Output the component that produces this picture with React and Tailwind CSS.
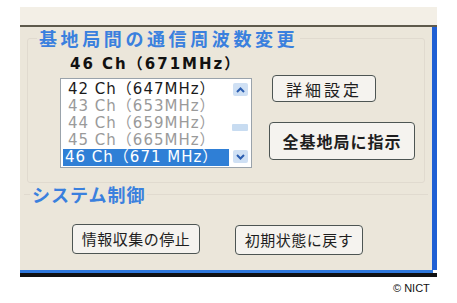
import React from 'react';

const items = [
  { label: '42 Ch（647MHz）', tone: 'text-[#1a1a1a]' },
  { label: '43 Ch（653MHz）', tone: 'text-[#9a9a9a]' },
  { label: '44 Ch（659MHz）', tone: 'text-[#9a9a9a]' },
  { label: '45 Ch（665MHz）', tone: 'text-[#9a9a9a]' },
];

const jp = { fontFamily: '"Noto Sans CJK JP", "DejaVu Sans", sans-serif' };
const latin = { fontFamily: '"DejaVu Sans", "Noto Sans CJK JP", sans-serif' };

const Chevron = ({ up }) => (
  <div className="w-[15px] h-[13px] bg-[#cfe0f4] rounded-[2px] flex items-center justify-center">
    <svg width="9" height="6" viewBox="0 0 9 6">
      <path
        d={up ? 'M1 5 L4.5 1.5 L8 5' : 'M1 1 L4.5 4.5 L8 1'}
        fill="none"
        stroke="#2a5db0"
        strokeWidth="2"
      />
    </svg>
  </div>
);

const Button = ({ children, className }) => (
  <button
    className={`border-[1.5px] border-[#4d5553] rounded-[4px] bg-[#f5f3ef] text-[#1e1e1e] flex items-center justify-center ${className}`}
    style={jp}
  >
    {children}
  </button>
);

const App = () => {
  return (
    <div className="w-[457px] h-[303px] bg-white relative overflow-hidden">
      <div className="ml-[20px] pt-[7px] w-[417px]">
        <div className="h-[18px] bg-[#f3efe6]" />
        <div className="h-[2px] bg-[#5e5a4c]" />
        <div className="flex">
          <div className="w-[412px] bg-[#ebe6da] h-[243px]">
            <fieldset className="ml-[7px] w-[398px] h-[156px] border border-[#e0dacf] rounded-[3px]">
              <legend
                className="ml-[9px] px-[2px] text-[18px] leading-[22px] font-bold text-[#3a80de] tracking-[3.6px]"
                style={jp}
              >
                基地局間の通信周波数変更
              </legend>
              <div className="flex">
                <div className="ml-[32px]">
                  <div
                    className="ml-[10px] mt-[6px] text-[15px] leading-[18px] font-bold text-[#111] tracking-[2px]"
                    style={latin}
                  >
                    46 Ch（671MHz）
                  </div>
                  <div className="mt-[5px] w-[192px] h-[90px] bg-white border border-[#9aa3ab] flex">
                    <div className="flex-1 pt-[2px] pl-[2px] flex flex-col">
                      {items.map((it) => (
                        <div
                          key={it.label}
                          className={`h-[17px] pl-[5px] text-[15px] leading-[17px] whitespace-nowrap tracking-[1px] ${it.tone}`}
                          style={latin}
                        >
                          {it.label}
                        </div>
                      ))}
                      <div
                        className="h-[17px] pl-[2px] bg-[#2f7fd6] text-white text-[15px] leading-[17px] whitespace-nowrap tracking-[1px]"
                        style={latin}
                      >
                        46 Ch（671 MHz）
                      </div>
                    </div>
                    <div className="w-[22px] flex flex-col items-center pt-[4px] pb-[4px]">
                      <Chevron up />
                      <div className="flex-1 w-full flex flex-col items-center pt-[28px]">
                        <div className="w-[16px] h-[7px] bg-[#c8dcf1] rounded-[1px]" />
                      </div>
                      <Chevron />
                    </div>
                  </div>
                </div>
                <div className="ml-[17px] mt-[26px] flex flex-col">
                  <Button className="ml-[3px] w-[104px] h-[27px] text-[16px] tracking-[3px]">詳細設定</Button>
                  <Button className="mt-[20px] w-[146px] h-[38px] text-[16px] font-bold tracking-[1px]">
                    全基地局に指示
                  </Button>
                </div>
              </div>
            </fieldset>
            <fieldset className="ml-[4px] w-[404px] h-[78px] border-t border-[#e0dacf]">
              <legend
                className="ml-[6px] px-[2px] text-[18px] leading-[22px] font-bold text-[#3a80de] tracking-[1px]"
                style={jp}
              >
                システム制御
              </legend>
              <div className="flex mt-[19px]">
                <Button className="ml-[48px] w-[128px] h-[30px] text-[15px] tracking-[0.5px]">情報収集の停止</Button>
                <Button className="ml-[35px] mt-[1px] w-[128px] h-[30px] text-[15px] tracking-[0.5px]">
                  初期状態に戻す
                </Button>
              </div>
            </fieldset>
          </div>
          <div className="w-[5px] bg-[#1f5fd4]" />
        </div>
        <div className="w-[413px] h-[3px] bg-[#2f78dc]" />
        <div className="w-[417px] h-[4px] bg-[#111]" />
      </div>
      <div
        className="ml-[393px] mt-[5px] text-[11px] leading-[12px] text-[#111]"
        style={{ fontFamily: '"Liberation Sans", sans-serif' }}
      >
        © NICT
      </div>
    </div>
  );
};

export default App;
